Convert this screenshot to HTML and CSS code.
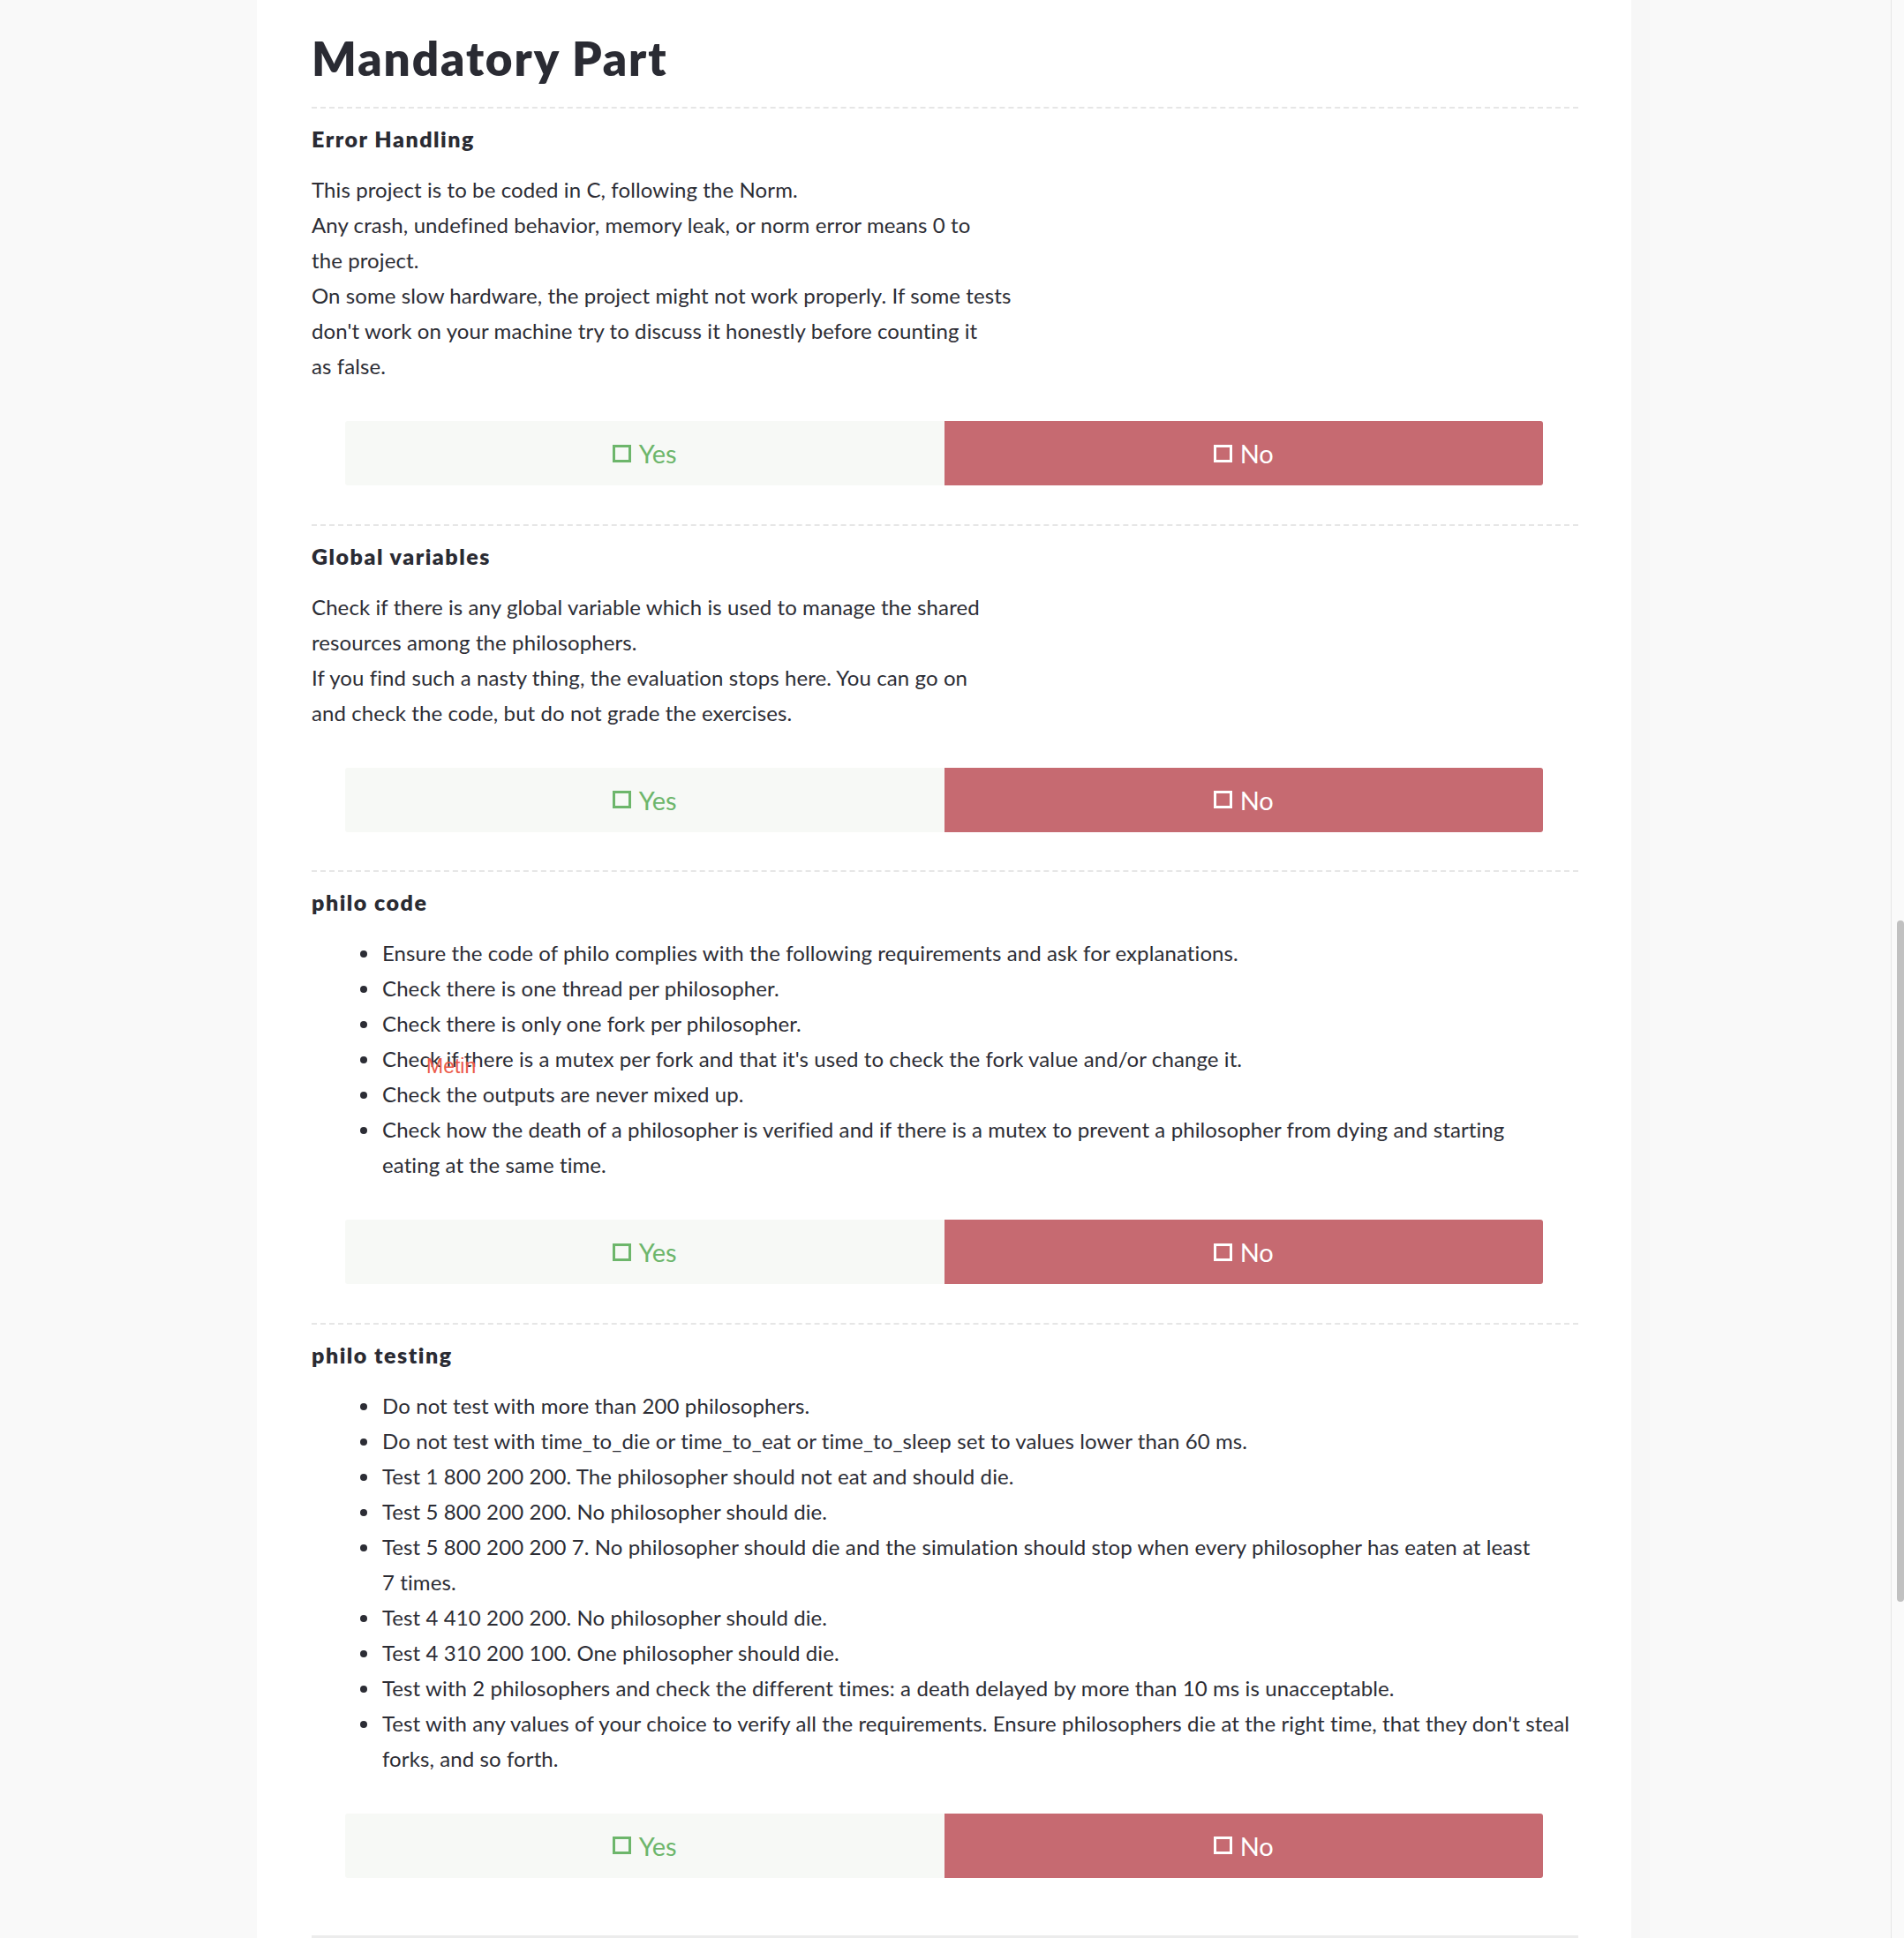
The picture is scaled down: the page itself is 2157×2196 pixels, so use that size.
FILE: index.html
```html
<!DOCTYPE html>
<html lang="en">
<head>
<meta charset="utf-8">
<title>Mandatory Part</title>
<link rel="stylesheet" href="styles.css">
</head>
<body>
<div class="layout">
  <main class="panel">
    <h1 class="title">Mandatory Part</h1>

    <section class="block">
      <h3 class="block-title">Error Handling</h3>
      <p class="block-text">This project is to be coded in C, following the Norm.<br>Any crash, undefined behavior, memory leak, or norm error means 0 to<br>the project.<br>On some slow hardware, the project might not work properly. If some tests<br>don't work on your machine try to discuss it honestly before counting it<br>as false.</p>
      <div class="answers">
        <button class="answer answer-yes"><svg viewBox="0 0 21 20"><rect x="1.5" y="1.5" width="18" height="17" fill="none" stroke="currentColor" stroke-width="3"/></svg>Yes</button>
        <button class="answer answer-no"><svg viewBox="0 0 21 20"><rect x="1.5" y="1.5" width="18" height="17" fill="none" stroke="currentColor" stroke-width="3"/></svg>No</button>
      </div>
    </section>

    <section class="block">
      <h3 class="block-title">Global variables</h3>
      <p class="block-text">Check if there is any global variable which is used to manage the shared<br>resources among the philosophers.<br>If you find such a nasty thing, the evaluation stops here. You can go on<br>and check the code, but do not grade the exercises.</p>
      <div class="answers">
        <button class="answer answer-yes"><svg viewBox="0 0 21 20"><rect x="1.5" y="1.5" width="18" height="17" fill="none" stroke="currentColor" stroke-width="3"/></svg>Yes</button>
        <button class="answer answer-no"><svg viewBox="0 0 21 20"><rect x="1.5" y="1.5" width="18" height="17" fill="none" stroke="currentColor" stroke-width="3"/></svg>No</button>
      </div>
    </section>

    <section class="block">
      <h3 class="block-title">philo code</h3>
      <ul class="checklist">
        <li>Ensure the code of philo complies with the following requirements and ask for explanations.</li>
        <li>Check there is one thread per philosopher.</li>
        <li>Check there is only one fork per philosopher.</li>
        <li>Check if there is a mutex per fork and that it's used to check the fork value and/or change it.</li>
        <li>Check the outputs are never mixed up.</li>
        <li>Check how the death of a philosopher is verified and if there is a mutex to prevent a philosopher from dying and starting<br>eating at the same time.</li>
      </ul>
      <div class="answers">
        <button class="answer answer-yes"><svg viewBox="0 0 21 20"><rect x="1.5" y="1.5" width="18" height="17" fill="none" stroke="currentColor" stroke-width="3"/></svg>Yes</button>
        <button class="answer answer-no"><svg viewBox="0 0 21 20"><rect x="1.5" y="1.5" width="18" height="17" fill="none" stroke="currentColor" stroke-width="3"/></svg>No</button>
      </div>
    </section>

    <section class="block">
      <h3 class="block-title">philo testing</h3>
      <ul class="checklist">
        <li>Do not test with more than 200 philosophers.</li>
        <li>Do not test with time_to_die or time_to_eat or time_to_sleep set to values lower than 60 ms.</li>
        <li>Test 1 800 200 200. The philosopher should not eat and should die.</li>
        <li>Test 5 800 200 200. No philosopher should die.</li>
        <li>Test 5 800 200 200 7. No philosopher should die and the simulation should stop when every philosopher has eaten at least<br>7 times.</li>
        <li>Test 4 410 200 200. No philosopher should die.</li>
        <li>Test 4 310 200 100. One philosopher should die.</li>
        <li>Test with 2 philosophers and check the different times: a death delayed by more than 10 ms is unacceptable.</li>
        <li>Test with any values of your choice to verify all the requirements. Ensure philosophers die at the right time, that they don't steal<br>forks, and so forth.</li>
      </ul>
      <div class="answers">
        <button class="answer answer-yes"><svg viewBox="0 0 21 20"><rect x="1.5" y="1.5" width="18" height="17" fill="none" stroke="currentColor" stroke-width="3"/></svg>Yes</button>
        <button class="answer answer-no"><svg viewBox="0 0 21 20"><rect x="1.5" y="1.5" width="18" height="17" fill="none" stroke="currentColor" stroke-width="3"/></svg>No</button>
      </div>
    </section>

    <div class="next-part"></div>
  </main>
  <div class="gutter"></div>
</div>
<div class="scrollbar"><div class="scrollbar-thumb"></div></div>
<span class="cursor-label">Metin</span>
</body>
</html>
```
FILE: styles.css
```css
html, body {
  margin: 0;
  height: 2196px;
  overflow: hidden;
}

body {
  background: #f9f9f9;
  font-family: Lato, "Noto Sans", sans-serif;
  color: #2c2d35;
  position: relative;
}

.layout {
  display: flex;
  padding-left: 291px;
  min-height: 2196px;
}

.panel {
  width: 1557px;
  box-sizing: border-box;
  padding: 34px 60px 0 62px;
  background: #ffffff;
}

.gutter {
  width: 21px;
  background: #f7f7f7;
}

.title {
  margin: 0 0 23px;
  font-size: 53px;
  line-height: 64px;
  font-weight: 800;
  letter-spacing: 1.9px;
  color: #2a2b33;
}

.block {
  border-top: 2px dashed #e6e6e6;
  padding: 19px 0 43.5px;
}

.block-title {
  margin: 0 0 23px;
  font-size: 25px;
  line-height: 30px;
  font-weight: 800;
  letter-spacing: 1.5px;
  color: #2a2b33;
}

.block-text {
  margin: 0 0 42px;
  max-width: 820px;
  font-size: 24px;
  line-height: 40px;
  letter-spacing: 0.1px;
}

.checklist {
  margin: 0 0 42px;
  padding: 0 0 0 55px;
  list-style: none;
  font-size: 24px;
  line-height: 40px;
  letter-spacing: 0.1px;
}

.checklist li {
  display: flex;
}

.checklist li::before {
  content: "";
  flex: none;
  width: 8px;
  height: 8px;
  margin: 17px 17px 0 0;
  border-radius: 50%;
  background: currentColor;
}

.answers {
  display: flex;
  height: 73px;
  margin: 0 40px 0 38px;
}

.answer {
  flex: 1;
  display: flex;
  align-items: center;
  justify-content: center;
  gap: 9px;
  padding: 0;
  border: 0;
  font-family: inherit;
  font-size: 29px;
  line-height: 1;
}

.answer svg {
  width: 21px;
  height: 20px;
}

.answer-yes {
  background: #f7f9f6;
  color: #6db66b;
  border-radius: 3px 0 0 3px;
}

.answer-no {
  background: #c66a71;
  color: #ffffff;
  border-radius: 0 3px 3px 0;
}

.next-part {
  margin-top: 22px;
  border-top: 3px solid #ececec;
  height: 40px;
}

.scrollbar {
  position: absolute;
  top: 0;
  right: 0;
  width: 14px;
  height: 2196px;
  border-left: 1px solid #e6e6e6;
  background: #fafafa;
}

.scrollbar-thumb {
  margin: 1043px 0 0 6px;
  width: 8px;
  height: 772px;
  border-radius: 4px;
  background: #c1c1c1;
}

.cursor-label {
  position: absolute;
  left: 483px;
  top: 1197px;
  font-family: "Liberation Sans", Arial, sans-serif;
  font-size: 23px;
  line-height: 23px;
  color: #ec5a49;
}
```
